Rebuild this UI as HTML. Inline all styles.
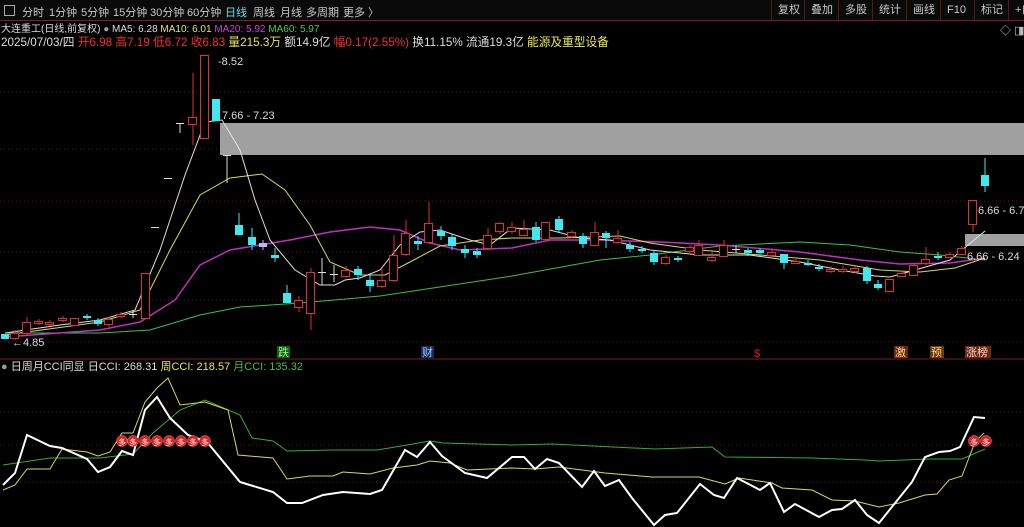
<!DOCTYPE html><html><head><meta charset="utf-8"><style>
body{margin:0;width:1024px;height:527px;background:#000;overflow:hidden;font-family:"Liberation Sans","Noto Sans CJK SC",sans-serif;position:relative}
.t{position:absolute;white-space:nowrap;font-size:11px;line-height:12px}
.tab{position:absolute;top:4px;font-size:11px;color:#c8c8c8}
.btn{position:absolute;top:0;height:20px;line-height:20px;font-size:11px;color:#c8c8c8;border-left:1px solid #5a1a1a;padding:0 6px}
</style></head><body>
<div style="position:absolute;left:0;top:0;width:1024px;height:20px;background:#0a0a0a;border-bottom:1px solid #7a1e1e"></div>
<div style="position:absolute;left:4px;top:5px;width:9px;height:9px;border:1px solid #aaa"></div>
<div class="tab" style="left:22px">分时</div><div class="tab" style="left:49px">1分钟</div><div class="tab" style="left:81px">5分钟</div><div class="tab" style="left:113px">15分钟</div><div class="tab" style="left:150px">30分钟</div><div class="tab" style="left:187px">60分钟</div><div class="tab" style="left:225px;color:#5ee0e8">日线</div><div class="tab" style="left:253px">周线</div><div class="tab" style="left:280px">月线</div><div class="tab" style="left:306px">多周期</div><div class="tab" style="left:343px">更多 〉</div>
<div class="btn" style="left:771px">复权</div><div class="btn" style="left:804px">叠加</div><div class="btn" style="left:838px">多股</div><div class="btn" style="left:872px">统计</div><div class="btn" style="left:906px">画线</div><div class="btn" style="left:940px">F10</div><div class="btn" style="left:974px">标记</div><div class="btn" style="left:1008px">+自</div>
<div class="t" style="left:1000px;top:25px;color:#bbb">◇ ◨</div>
<div class="t" style="left:1px;top:24px;color:#ddd;font-size:10px">大连重工(日线,前复权) <span style="color:#999">●</span> MA5: 6.28 <span style="color:#e8e85a">MA10: 6.01</span> <span style="color:#d040d0">MA20: 5.92</span> <span style="color:#40d040">MA60: 5.97</span></div>
<div class="t" style="left:1px;top:37px;color:#ddd;font-size:11.7px">2025/07/03/四 <span style="color:#f03030">开6.98 高7.19 低6.72 收6.83 </span><span style="color:#e8e85a">量215.3万</span> 额14.9亿 <span style="color:#f03030">幅0.17(2.55%)</span> 换11.15% 流通19.3亿 <span style="color:#e8e85a">能源及重型设备</span></div>
<svg width="1024" height="527" style="position:absolute;left:0;top:0">
<g stroke="#6a1818" stroke-dasharray="1,3" stroke-width="1">
<line x1="0" x2="1024" y1="92" y2="92"/><line x1="0" x2="1024" y1="149" y2="149"/><line x1="0" x2="1024" y1="201" y2="201"/><line x1="0" x2="1024" y1="252" y2="252"/><line x1="0" x2="1024" y1="300" y2="300"/><line x1="0" x2="1024" y1="342" y2="342"/>
<line x1="0" x2="1024" y1="412" y2="412"/><line x1="0" x2="1024" y1="445" y2="445"/><line x1="0" x2="1024" y1="482" y2="482"/></g>
<line x1="0" x2="1024" y1="359" y2="359" stroke="#7a1e1e"/>
<rect x="220" y="123" width="804" height="32" fill="#a0a0a0"/>
<rect x="965" y="234" width="59" height="12" fill="#a0a0a0"/>
<g fill="none" stroke-width="1">
<polyline stroke="#40c040" points="5,333 100,333 150,330 200,315 240,307 300,303 380,296 512,276 600,260 650,255 720,246 800,242 850,245 900,252 940,255 985,260"/>
<polyline stroke="#c030c0" stroke-width="1.5" points="5,337 100,330 140,322 175,300 200,265 230,250 260,245 290,240 330,232 370,227 400,230 430,243 460,250 512,248 550,240 600,240 660,242 720,245 800,252 860,260 900,264 950,263 985,258"/>
<polyline stroke="#d8d860" points="5,335 100,322 140,310 170,250 200,195 230,178 262,174 285,190 310,225 330,262 360,275 385,275 410,262 440,246 480,240 512,238 560,238 620,236 650,243 700,250 760,255 820,260 880,270 920,272 955,268 985,258"/>
<polyline stroke="#e0e0e0" points="5,333 60,325 100,320 135,310 160,250 185,175 205,122 222,120 240,150 255,200 270,240 295,270 320,285 335,285 345,280 360,278 380,270 400,245 420,232 440,230 470,240 490,245 512,228 550,230 580,238 610,240 650,250 700,255 750,255 800,262 840,270 875,276 890,277 915,270 950,260 985,231"/>
</g>
<g id="c"></g>
<text x="218" y="65" fill="#ddd" font-size="11">-8.52</text>
<text x="222" y="119" fill="#ddd" font-size="11">7.66 - 7.23</text>
<text x="978" y="214" fill="#ddd" font-size="11">6.66 - 6.7</text>
<text x="967" y="260" fill="#ddd" font-size="11">6.66 - 6.24</text>
<text x="12" y="346" fill="#ddd" font-size="11">←4.85</text>
<rect x="277" y="346" width="13" height="12" fill="#1a5a1a"/><text x="278" y="356" fill="#8f8" font-size="11">跌</text>
<rect x="421" y="346" width="13" height="12" fill="#1a2a5a"/><text x="422" y="356" fill="#9cf" font-size="11">财</text>
<text x="754" y="357" fill="#e02020" font-size="11">$</text>
<rect x="894" y="346" width="14" height="12" fill="#6a2a10"/><text x="895" y="356" fill="#fc8" font-size="11">激</text>
<rect x="930" y="346" width="14" height="12" fill="#6a3a10"/><text x="931" y="356" fill="#fc8" font-size="11">预</text>
<rect x="965" y="346" width="26" height="12" fill="#6a2a10"/><text x="966" y="356" fill="#fcc" font-size="11">涨榜</text>
<g fill="none">
<polyline stroke="#30b030" points="3,465 50,458 100,458 133,454 153,433 180,410 205,400 240,415 252,438 273,441 287,451 333,450 377,450 407,445 430,441 443,443 512,445 552,444 655,449 712,447 725,457 812,458 865,460 879,461 929,459 962,459 985,449"/>
<polyline stroke="#d8d860" points="3,490 15,485 27,469 50,469 62,449 87,452 98,456 110,452 122,433 133,433 145,402 157,388 168,378 180,405 205,402 228,410 238,455 273,458 287,479 310,476 333,476 343,472 370,474 393,468 417,465 430,461 450,463 467,470 512,468 535,469 559,467 605,473 652,477 699,477 725,484 739,478 772,483 782,488 812,490 832,500 855,501 879,507 899,503 925,495 937,494 949,480 962,476 975,442 984,433"/>
<polyline stroke="#fff" stroke-width="2" points="3,485 15,473 27,435 50,446 62,448 87,459 98,472 110,467 122,451 133,455 145,410 157,397 170,418 188,435 207,442 240,482 273,492 287,503 302,503 323,495 343,492 370,494 382,490 405,450 417,457 430,442 442,456 465,473 487,478 512,457 524,457 535,469 547,459 559,463 582,487 594,471 605,486 619,480 632,498 654,525 665,515 677,513 700,484 714,495 724,498 737,478 760,490 770,483 784,512 795,504 819,517 832,510 842,509 855,500 867,515 879,523 912,482 925,457 939,452 950,451 960,447 974,417 985,418"/>
</g>
<g id="b"></g>
</svg>
<div class="t" style="left:1px;top:361px;color:#ddd"><span style="color:#999">●</span> 日周月CCI同显 日CCI: 268.31 <span style="color:#e8e85a">周CCI: 218.57</span> <span style="color:#40c040">月CCI: 135.32</span></div>
<script>
var R="#e03030",C="#40e8f0",W="#ddd";
var d=[[5,C,334,339,334,339],[15,R,333,338,330,340],[27,R,322,333,317,335],[39,R,321,323,319,325],[50,R,322,324,320,326],[63,R,318,320,316,322],[75,R,318,325,318,325],[87,C,316,318,314,320],[98,C,320,324,318,326],[109,R,319,324,317,327],[121,R,314,316,312,318],[133,W,314,315,311,318],[146,R,273,318,273,318],[155,W,227,228,227,228],[168,W,178,179,178,179],[180,W,123,124,123,133],[193,R,117,124,73,145],[205,R,55,138,55,138],[216,C,99,121,99,121],[227,W,155,156,155,183],[239,C,225,235,213,235],[252,C,237,245,228,250],[263,"#b8b8ff",243,247,240,250],[275,C,255,258,248,262],[287,C,293,303,285,303],[299,R,300,307,296,312],[311,R,272,313,268,330],[322,W,272,273,258,285],[334,W,274,275,265,282],[346,R,270,276,266,278],[358,C,269,275,266,280],[370,C,280,286,275,292],[382,R,280,286,268,288],[394,R,255,280,235,282],[406,R,233,254,220,256],[418,C,241,244,236,250],[429,R,223,242,202,244],[441,C,231,236,226,240],[452,C,237,246,234,250],[465,C,249,253,245,258],[477,C,251,255,248,258],[488,R,235,248,228,250],[500,R,223,231,222,234],[512,R,227,231,222,234],[524,R,229,235,220,236],[536,C,227,240,222,242],[546,R,222,239,222,240],[559,C,219,230,216,232],[572,R,232,236,230,238],[583,C,236,244,233,248],[595,R,232,245,222,246],[606,C,233,238,231,248],[618,R,238,242,230,244],[630,C,245,249,242,252],[642,C,249,251,246,253],[654,C,253,262,250,265],[666,R,257,263,255,265],[678,C,258,260,256,262],[690,R,247,251,245,254],[699,R,245,255,240,256],[712,R,257,260,252,262],[724,R,245,256,240,257],[736,W,249,250,246,253],[748,C,250,253,248,256],[760,C,250,253,248,256],[772,R,252,255,248,256],[784,C,254,263,254,269],[796,R,261,263,259,264],[808,C,263,265,260,266],[819,C,267,269,264,271],[831,R,269,271,266,273],[843,R,269,271,266,273],[855,R,268,271,266,273],[867,C,268,281,266,284],[878,C,284,288,280,290],[890,R,279,291,279,292],[902,R,273,276,271,277],[914,R,265,275,264,276],[926,R,259,263,247,265],[938,C,256,258,252,260],[950,R,254,257,252,258],[962,R,248,254,246,255],[973,R,200,224,200,232],[985,C,175,186,158,192]];
var s="";d.forEach(function(c){var x=c[0],w=8,t=Math.min(c[2],c[3]),h=Math.max(1,Math.abs(c[3]-c[2]));s+='<line x1="'+x+'" x2="'+x+'" y1="'+c[4]+'" y2="'+c[5]+'" stroke="'+c[1]+'"/>';if(c[1]==R)s+='<rect x="'+(x-4.5)+'" y="'+(t+.5)+'" width="'+w+'" height="'+h+'" fill="#000" stroke="'+R+'"/>';else s+='<rect x="'+(x-4)+'" y="'+t+'" width="'+w+'" height="'+h+'" fill="'+c[1]+'"/>';});
document.getElementById("c").innerHTML=s;
var b="";[122,133,145,157,169,181,193,205,974,986].forEach(function(x){b+='<circle cx="'+x+'" cy="441" r="5.5" fill="#e02020" stroke="#ff8080" stroke-width=".5"/><text x="'+(x-4)+'" y="445" font-size="8" fill="#fff">多</text>';});
document.getElementById("b").innerHTML=b;
</script>
</body></html>
